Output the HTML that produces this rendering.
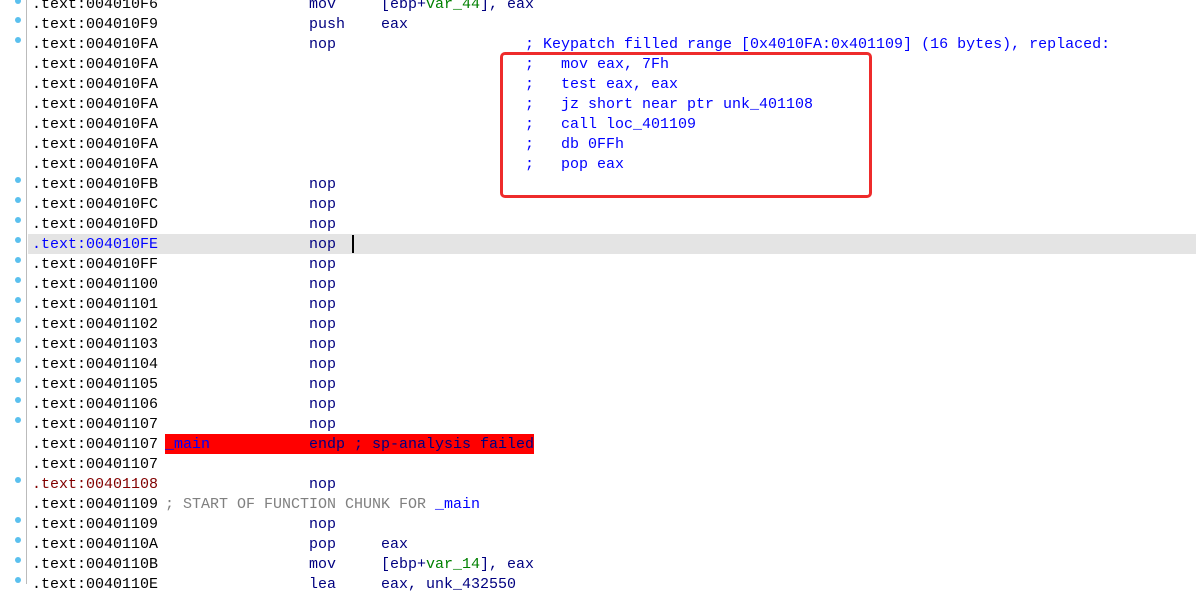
<!DOCTYPE html>
<html><head><meta charset="utf-8"><style>
body{margin:0;width:1196px;height:584px;overflow:hidden;background:#fff;position:relative;font-family:"Liberation Mono",monospace;font-size:15px;}
.r{position:absolute;left:0;width:1196px;height:20px;line-height:22px;white-space:pre;color:#000}
.r span{position:absolute;top:0}
.a{left:32px}
.m{left:309px;color:#000080}
.o{left:381px;color:#000080}
.c{left:525px;color:#0000ff}
.d{position:absolute;left:15px;width:6px;height:6px;border-radius:3px;background:#5bc0ee}
.gl{position:absolute;left:26px;top:0;width:1px;height:584px;background:#bbb}
.g{color:#008000}
.hl{position:absolute;left:28px;top:234px;width:1168px;height:20px;background:#e4e4e4}
</style></head><body>
<div class="gl"></div>
<div class="hl"></div>
<div style="position:absolute;left:352px;top:235px;width:2px;height:18px;background:#000"></div>
<div style="position:absolute;left:165px;top:434px;width:369px;height:20px;background:#ff0000"></div>
<div style="position:absolute;left:500px;top:52px;width:366px;height:140px;border:3px solid #ee2b2b;border-radius:5px"></div>

<div class="r" style="top:-6px"><span class="a">.text:004010F6</span><span class="m">mov</span><span class="o">[ebp+<span class="g" style="position:static">var_44</span>], eax</span></div>
<div class="r" style="top:14px"><span class="a">.text:004010F9</span><span class="m">push</span><span class="o">eax</span></div>
<div class="r" style="top:34px"><span class="a">.text:004010FA</span><span class="m">nop</span><span class="c">; Keypatch filled range [0x4010FA:0x401109] (16 bytes), replaced:</span></div>
<div class="r" style="top:54px"><span class="a">.text:004010FA</span><span class="c">;   mov eax, 7Fh</span></div>
<div class="r" style="top:74px"><span class="a">.text:004010FA</span><span class="c">;   test eax, eax</span></div>
<div class="r" style="top:94px"><span class="a">.text:004010FA</span><span class="c">;   jz short near ptr unk_401108</span></div>
<div class="r" style="top:114px"><span class="a">.text:004010FA</span><span class="c">;   call loc_401109</span></div>
<div class="r" style="top:134px"><span class="a">.text:004010FA</span><span class="c">;   db 0FFh</span></div>
<div class="r" style="top:154px"><span class="a">.text:004010FA</span><span class="c">;   pop eax</span></div>
<div class="r" style="top:174px"><span class="a">.text:004010FB</span><span class="m">nop</span></div>
<div class="r" style="top:194px"><span class="a">.text:004010FC</span><span class="m">nop</span></div>
<div class="r" style="top:214px"><span class="a">.text:004010FD</span><span class="m">nop</span></div>
<div class="r" style="top:234px"><span class="a" style="color:#0000ff">.text:004010FE</span><span class="m">nop</span></div>
<div class="r" style="top:254px"><span class="a">.text:004010FF</span><span class="m">nop</span></div>
<div class="r" style="top:274px"><span class="a">.text:00401100</span><span class="m">nop</span></div>
<div class="r" style="top:294px"><span class="a">.text:00401101</span><span class="m">nop</span></div>
<div class="r" style="top:314px"><span class="a">.text:00401102</span><span class="m">nop</span></div>
<div class="r" style="top:334px"><span class="a">.text:00401103</span><span class="m">nop</span></div>
<div class="r" style="top:354px"><span class="a">.text:00401104</span><span class="m">nop</span></div>
<div class="r" style="top:374px"><span class="a">.text:00401105</span><span class="m">nop</span></div>
<div class="r" style="top:394px"><span class="a">.text:00401106</span><span class="m">nop</span></div>
<div class="r" style="top:414px"><span class="a">.text:00401107</span><span class="m">nop</span></div>
<div class="r" style="top:434px"><span class="a">.text:00401107</span><span style="left:165px;color:#0000ff">_main</span><span class="m">endp ; sp-analysis failed</span></div>
<div class="r" style="top:454px"><span class="a">.text:00401107</span></div>
<div class="r" style="top:474px"><span class="a" style="color:#800000">.text:00401108</span><span class="m">nop</span></div>
<div class="r" style="top:494px"><span class="a">.text:00401109</span><span style="left:165px;color:#808080">; START OF FUNCTION CHUNK FOR <span style="position:static;color:#0000ff">_main</span></span></div>
<div class="r" style="top:514px"><span class="a">.text:00401109</span><span class="m">nop</span></div>
<div class="r" style="top:534px"><span class="a">.text:0040110A</span><span class="m">pop</span><span class="o">eax</span></div>
<div class="r" style="top:554px"><span class="a">.text:0040110B</span><span class="m">mov</span><span class="o">[ebp+<span class="g" style="position:static">var_14</span>], eax</span></div>
<div class="r" style="top:574px"><span class="a">.text:0040110E</span><span class="m">lea</span><span class="o">eax, unk_432550</span></div>

<div class="d" style="top:-2px"></div>
<div class="d" style="top:17px"></div>
<div class="d" style="top:37px"></div>
<div class="d" style="top:177px"></div>
<div class="d" style="top:197px"></div>
<div class="d" style="top:217px"></div>
<div class="d" style="top:237px"></div>
<div class="d" style="top:257px"></div>
<div class="d" style="top:277px"></div>
<div class="d" style="top:297px"></div>
<div class="d" style="top:317px"></div>
<div class="d" style="top:337px"></div>
<div class="d" style="top:357px"></div>
<div class="d" style="top:377px"></div>
<div class="d" style="top:397px"></div>
<div class="d" style="top:417px"></div>
<div class="d" style="top:477px"></div>
<div class="d" style="top:517px"></div>
<div class="d" style="top:537px"></div>
<div class="d" style="top:557px"></div>
<div class="d" style="top:577px"></div>
</body></html>
